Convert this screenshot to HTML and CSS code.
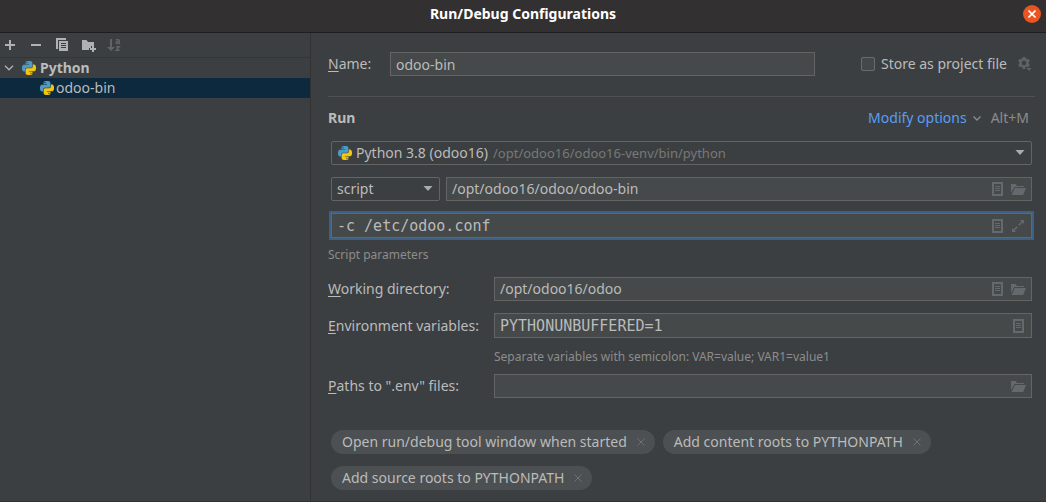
FILE: index.html
```html
<!DOCTYPE html>
<html lang="en">
<head>
<meta charset="utf-8">
<title>Run/Debug Configurations</title>
<link rel="stylesheet" href="styles.css">
</head>
<body>
<svg class="sprite" aria-hidden="true">
  <symbol id="python" viewBox="0 0 24 24">
    <path fill="#4a9bc9" d="M14.25.18l.9.2.73.26.59.3.45.32.34.34.25.34.16.33.1.3.04.26.02.2-.01.13V8.5l-.05.63-.13.55-.21.46-.26.38-.3.31-.33.25-.35.19-.35.14-.33.1-.3.07-.26.04-.21.02H8.77l-.69.05-.59.14-.5.22-.41.27-.33.32-.27.35-.2.36-.15.37-.1.35-.07.32-.04.27-.02.21v3.06H3.17l-.21-.03-.28-.07-.32-.12-.35-.18-.36-.26-.36-.36-.35-.46-.32-.59-.28-.73-.21-.88-.14-1.05-.05-1.23.06-1.22.16-1.04.24-.87.32-.71.36-.57.4-.44.42-.33.42-.24.4-.16.36-.1.32-.05.24-.01h.16l.06.01h8.16v-.83H6.18l-.01-2.75-.02-.37.05-.34.11-.31.17-.28.25-.26.31-.23.38-.2.44-.18.51-.15.58-.12.64-.1.71-.06.77-.04.84-.02 1.27.05zm-6.3 1.98l-.23.33-.08.41.08.41.23.34.33.22.41.09.41-.09.33-.22.23-.34.08-.41-.08-.41-.23-.33-.33-.22-.41-.09-.41.09z"/>
    <path fill="#f2c50f" transform="rotate(180 12 12)" d="M14.25.18l.9.2.73.26.59.3.45.32.34.34.25.34.16.33.1.3.04.26.02.2-.01.13V8.5l-.05.63-.13.55-.21.46-.26.38-.3.31-.33.25-.35.19-.35.14-.33.1-.3.07-.26.04-.21.02H8.77l-.69.05-.59.14-.5.22-.41.27-.33.32-.27.35-.2.36-.15.37-.1.35-.07.32-.04.27-.02.21v3.06H3.17l-.21-.03-.28-.07-.32-.12-.35-.18-.36-.26-.36-.36-.35-.46-.32-.59-.28-.73-.21-.88-.14-1.05-.05-1.23.06-1.22.16-1.04.24-.87.32-.71.36-.57.4-.44.42-.33.42-.24.4-.16.36-.1.32-.05.24-.01h.16l.06.01h8.16v-.83H6.18l-.01-2.75-.02-.37.05-.34.11-.31.17-.28.25-.26.31-.23.38-.2.44-.18.51-.15.58-.12.64-.1.71-.06.77-.04.84-.02 1.27.05zm-6.3 1.98l-.23.33-.08.41.08.41.23.34.33.22.41.09.41-.09.33-.22.23-.34.08-.41-.08-.41-.23-.33-.33-.22-.41-.09-.41.09z"/>
  </symbol>
  <symbol id="doc" viewBox="0 0 16 16">
    <path fill="none" stroke="currentColor" stroke-width="2" d="M4 2h9v12H4z"/>
    <path stroke="currentColor" d="M6 5.500h5M6 7.500h5M6 9.500h5"/>
  </symbol>
  <symbol id="folder" viewBox="0 0 16 16">
    <path fill="currentColor" d="M1 3h4.500l1.500 2h7v1H4.500L1 12z"/>
    <path fill="currentColor" d="M4.800 7H16l-2.800 7H1.500z"/>
  </symbol>
  <symbol id="expand" viewBox="0 0 16 16">
    <path fill="currentColor" d="M10 2h4v4zM2 10v4h4z"/>
    <path fill="none" stroke="currentColor" stroke-width="1.600" d="M12.500 3.500L8.800 7.200M3.500 12.500l3.700-3.700"/>
  </symbol>
  <symbol id="arrow" viewBox="0 0 10 6">
    <path fill="#a9abad" d="M.5 0h9L5 5z"/>
  </symbol>
  <symbol id="cross" viewBox="0 0 8 8">
    <path fill="none" stroke="currentColor" d="M.5.5l7 7M7.500.5l-7 7"/>
  </symbol>
</svg>

<div class="dialog">
  <header class="titlebar">
    <h1 class="title">Run/Debug Configurations</h1>
    <button class="close" type="button" aria-label="Close"><svg width="8" height="8" viewBox="0 0 8 8"><path fill="none" stroke="#fff" stroke-width="1.600" d="M.5.500l7 7M7.500.5l-7 7"/></svg></button>
  </header>

  <div class="body">
    <aside class="sidebar">
      <div class="toolbar">
        <button class="tool" type="button" aria-label="Add"><svg class="icon" viewBox="0 0 16 16"><path stroke="currentColor" stroke-width="2" d="M8 3v10M3 8h10"/></svg></button>
        <button class="tool" type="button" aria-label="Remove"><svg class="icon" viewBox="0 0 16 16"><path stroke="currentColor" stroke-width="2" d="M3 8h10"/></svg></button>
        <button class="tool" type="button" aria-label="Copy"><svg class="icon" viewBox="0 0 16 16"><path fill="currentColor" fill-rule="evenodd" d="M2 1h10v2H4v9H2zM5 4h9v10H5zM7 6v1h5V6zM7 8v1h5V8zM7 10v1h5v-1z"/></svg></button>
        <button class="tool" type="button" aria-label="New folder"><svg class="icon" viewBox="0 0 16 16"><path fill="currentColor" d="M2 3h4.500l1.500 2h6v4h-3v2H9v2H2z"/><path stroke="currentColor" stroke-width="2" d="M13 9v6M10 12h6"/></svg></button>
        <button class="tool" type="button" aria-label="Sort configurations" disabled><svg class="icon" viewBox="0 0 16 16"><path fill="currentColor" d="M4 2h2v8h3l-4 4-4-4h3z"/><path fill="none" stroke="currentColor" stroke-width="1.400" d="M10 2.700h2.300q1 0 1 1V7M13.300 4.600h-2q-1.300 0-1.300 1t1.300 1h2M10 9.700h3.300L10.200 13.300h3.500"/></svg></button>
      </div>
      <ul class="tree" role="tree">
        <li class="node" role="treeitem" aria-expanded="true">
          <svg class="chevron" viewBox="0 0 10 6"><path fill="none" stroke="#afb1b3" stroke-width="1.300" d="M1 .8l4 4 4-4"/></svg>
          <svg class="python"><use href="#python"/></svg><span class="node-name">Python</span>
        </li>
        <li class="node child" role="treeitem" aria-selected="true">
          <svg class="python"><use href="#python"/></svg><span>odoo-bin</span>
        </li>
      </ul>
    </aside>

    <main class="panel">
      <div class="name-row">
        <label for="name"><u>N</u>ame:</label>
        <input class="field" id="name" type="text" value="odoo-bin">
        <div class="store">
          <input class="check" id="store" type="checkbox">
          <label class="store-label" for="store">Store as project file</label>
          <button class="gear" type="button" aria-label="Storage options"><svg class="icon" viewBox="0 0 16 16"><circle cx="7" cy="7" r="3.600" fill="none" stroke="currentColor" stroke-width="2.600"/><path stroke="currentColor" stroke-width="3" d="M7 1v2M7 11v2M1.800 4l1.700 1M10.500 9l1.700 1M1.800 10l1.700-1M10.500 5l1.700-1"/><path fill="currentColor" stroke="#3c3f41" d="M8.500 11.500h7L12 15.500z"/></svg></button>
        </div>
      </div>

      <div class="run-head">
        <h2 class="heading">Run</h2>
        <button class="modify" type="button">Modify options<svg width="8" height="5" viewBox="0 0 8 5"><path fill="none" stroke="#8a8d8f" stroke-width="1.300" d="M.5.5L4 4 7.500.5"/></svg></button>
        <span class="shortcut">Alt+M</span>
      </div>

      <div class="run-fields">
        <div class="combo">
          <svg class="python"><use href="#python"/></svg>
          <select class="select" aria-label="Python interpreter"><option>Python 3.8 (odoo16)</option></select>
          <span class="path">/opt/odoo16/odoo16-venv/bin/python</span>
          <svg class="arrow"><use href="#arrow"/></svg>
        </div>
        <div class="target-row">
          <div class="combo kind">
            <select class="select grow" aria-label="Target type"><option>script</option><option>module</option></select>
            <svg class="arrow"><use href="#arrow"/></svg>
          </div>
          <div class="field box">
            <input class="input" type="text" aria-label="Script path" value="/opt/odoo16/odoo/odoo-bin">
            <button class="tail" type="button" aria-label="Insert macro"><svg class="icon"><use href="#doc"/></svg></button>
            <button class="tail" type="button" aria-label="Browse"><svg class="icon"><use href="#folder"/></svg></button>
          </div>
        </div>
        <div class="field box tall focused">
          <input class="input mono" id="params" type="text" value="-c /etc/odoo.conf">
          <button class="tail" type="button" aria-label="Insert macro"><svg class="icon"><use href="#doc"/></svg></button>
          <button class="tail" type="button" aria-label="Expand"><svg class="icon"><use href="#expand"/></svg></button>
        </div>
      </div>
      <label class="hint" for="params">Script parameters</label>

      <div class="options">
        <label for="workdir"><u>W</u>orking directory:</label>
        <div class="field box">
          <input class="input" id="workdir" type="text" value="/opt/odoo16/odoo">
          <button class="tail" type="button" aria-label="Insert macro"><svg class="icon"><use href="#doc"/></svg></button>
          <button class="tail" type="button" aria-label="Browse"><svg class="icon"><use href="#folder"/></svg></button>
        </div>
        <label for="env"><u>E</u>nvironment variables:</label>
        <div class="field box tall">
          <input class="input mono" id="env" type="text" value="PYTHONUNBUFFERED=1">
          <button class="tail" type="button" aria-label="Edit variables"><svg class="icon"><use href="#doc"/></svg></button>
        </div>
        <p class="hint env-hint">Separate variables with semicolon: VAR=value; VAR1=value1</p>
        <label for="paths"><u>P</u>aths to ".env" files:</label>
        <div class="field box">
          <input class="input" id="paths" type="text">
          <button class="tail" type="button" aria-label="Browse"><svg class="icon"><use href="#folder"/></svg></button>
        </div>
      </div>

      <ul class="tags">
        <li class="tag">Open run/debug tool window when started<button class="remove" type="button" aria-label="Remove"><svg width="8" height="8"><use href="#cross"/></svg></button></li>
        <li class="tag">Add content roots to PYTHONPATH<button class="remove" type="button" aria-label="Remove"><svg width="8" height="8"><use href="#cross"/></svg></button></li>
        <li class="tag">Add source roots to PYTHONPATH<button class="remove" type="button" aria-label="Remove"><svg width="8" height="8"><use href="#cross"/></svg></button></li>
      </ul>
    </main>
  </div>
</div>
</body>
</html>
```

FILE: styles.css
```css
* {
  box-sizing: border-box;
}

body {
  margin: 0;
  background: #3c3f41;
  color: #bbbbbb;
  font: 14px/20px "Noto Sans", "Open Sans", sans-serif;
}

button,
input,
select {
  margin: 0;
  padding: 0;
  border: 0;
  background: none;
  color: inherit;
  font: inherit;
}

button {
  display: flex;
  align-items: center;
  justify-content: center;
}

ul {
  margin: 0;
  padding: 0;
  list-style: none;
}

svg {
  display: block;
  flex: none;
}

u {
  text-underline-offset: 2px;
}

.sprite {
  position: absolute;
  width: 0;
  height: 0;
}

.icon {
  width: 16px;
  height: 16px;
}

.python {
  width: 14px;
  height: 14px;
}

.arrow {
  width: 10px;
  height: 6px;
}

.dialog {
  display: flex;
  flex-direction: column;
  min-height: 100vh;
  border-bottom: 1px solid #323232;
}

/* Title bar */
.titlebar {
  display: grid;
  grid-template-columns: 1fr auto 1fr;
  align-items: center;
  height: 33px;
  padding: 0 5px 4px;
  border-bottom: 1px solid #1f1e1e;
  background: #333031;
}

.title {
  grid-column: 2;
  margin: 0;
  color: #ffffff;
  font-size: 14px;
  font-weight: 700;
}

.close {
  justify-self: end;
  width: 18px;
  height: 18px;
  border-radius: 50%;
  background: #e95420;
}

.body {
  display: flex;
  flex: 1;
}

/* Configuration tree */
.sidebar {
  flex: 0 0 311px;
  border-right: 1px solid #323232;
}

.toolbar {
  display: flex;
  gap: 10px;
  height: 25px;
  padding: 0 2px;
  border-bottom: 1px solid #333536;
}

.tool {
  color: #afb1b3;
}

.tool:disabled {
  color: #616365;
}

.node {
  display: flex;
  align-items: center;
  height: 20px;
  padding-left: 4px;
}

.chevron {
  width: 10px;
  height: 6px;
  margin-right: 8px;
}

.node-name {
  margin-left: 4px;
  font-weight: 700;
}

.child {
  gap: 2px;
  padding-left: 40px;
  background: #0d293e;
}

/* Settings panel */
.panel {
  flex: 1;
  min-width: 0;
  padding: 19px 11px 11px 17px;
}

.name-row {
  display: flex;
  align-items: center;
  padding-bottom: 20px;
  border-bottom: 1px solid #515151;
}

.name-row > label {
  width: 62px;
}

.field {
  flex: 1;
  min-width: 0;
  height: 24px;
  padding: 0 5px;
  border: 1px solid #646464;
  background: #45494a;
}

.store {
  display: flex;
  align-items: center;
  margin-left: 46px;
}

.check {
  appearance: none;
  width: 14px;
  height: 14px;
  margin-right: 6px;
  border: 1px solid #6b6b6b;
  border-radius: 2px;
  background: #43494a;
}

.store-label {
  min-width: 132px;
}

.gear {
  margin-left: 4px;
  margin-right: 2px;
  color: #5f6264;
}

.run-head {
  display: flex;
  align-items: center;
  height: 44px;
  padding: 0 6px 2px 0;
}

.heading {
  flex: 1;
  margin: 0;
  font-size: 14px;
  font-weight: 700;
}

.modify {
  gap: 6px;
  color: #589df6;
}

.shortcut {
  margin-left: 10px;
  color: #8c8c8c;
}

.run-fields {
  display: grid;
  gap: 12px;
  padding: 0 3px;
}

.combo {
  display: flex;
  align-items: center;
  height: 24px;
  padding: 0 6px;
  border: 1px solid #646464;
  border-radius: 2px;
}

.select {
  appearance: none;
  margin-left: 4px;
  outline: none;
}

.select.grow {
  flex: 1;
  min-width: 0;
  margin-left: 0;
}

.path {
  flex: 1;
  margin-left: 5px;
  color: #787878;
  font-size: 13px;
}

.target-row {
  display: flex;
  gap: 6px;
}

.kind {
  flex: 0 0 109px;
  padding: 0 6px 0 5px;
}

.box {
  display: flex;
  align-items: center;
  gap: 5px;
}

.tall {
  height: 25px;
}

.input {
  flex: 1;
  min-width: 0;
  outline: none;
}

.mono {
  font: 15px/20px "DejaVu Sans Mono", monospace;
}

.tail {
  color: #64696d;
}

.focused {
  border-color: #466d94;
  box-shadow: 0 0 0 2px #3d6185;
}

.hint {
  display: block;
  margin: 7px 0 0;
  color: #8c8c8c;
  font-size: 12px;
}

/* Labelled options */
.options {
  display: grid;
  grid-template-columns: 154px 1fr;
  column-gap: 12px;
  row-gap: 12px;
  align-items: center;
  margin-top: 12px;
  padding-right: 3px;
}

.env-hint {
  grid-column: 2;
  margin: -3px 0 -5px;
}

/* Added options */
.tags {
  display: flex;
  flex-wrap: wrap;
  gap: 12px 8px;
  margin-top: 32px;
  padding: 0 3px;
}

.tag {
  display: flex;
  align-items: center;
  gap: 10px;
  height: 24px;
  padding: 0 10px 0 11px;
  border-radius: 12px;
  background: #4c5052;
}

.remove {
  color: #6e7173;
}
```
